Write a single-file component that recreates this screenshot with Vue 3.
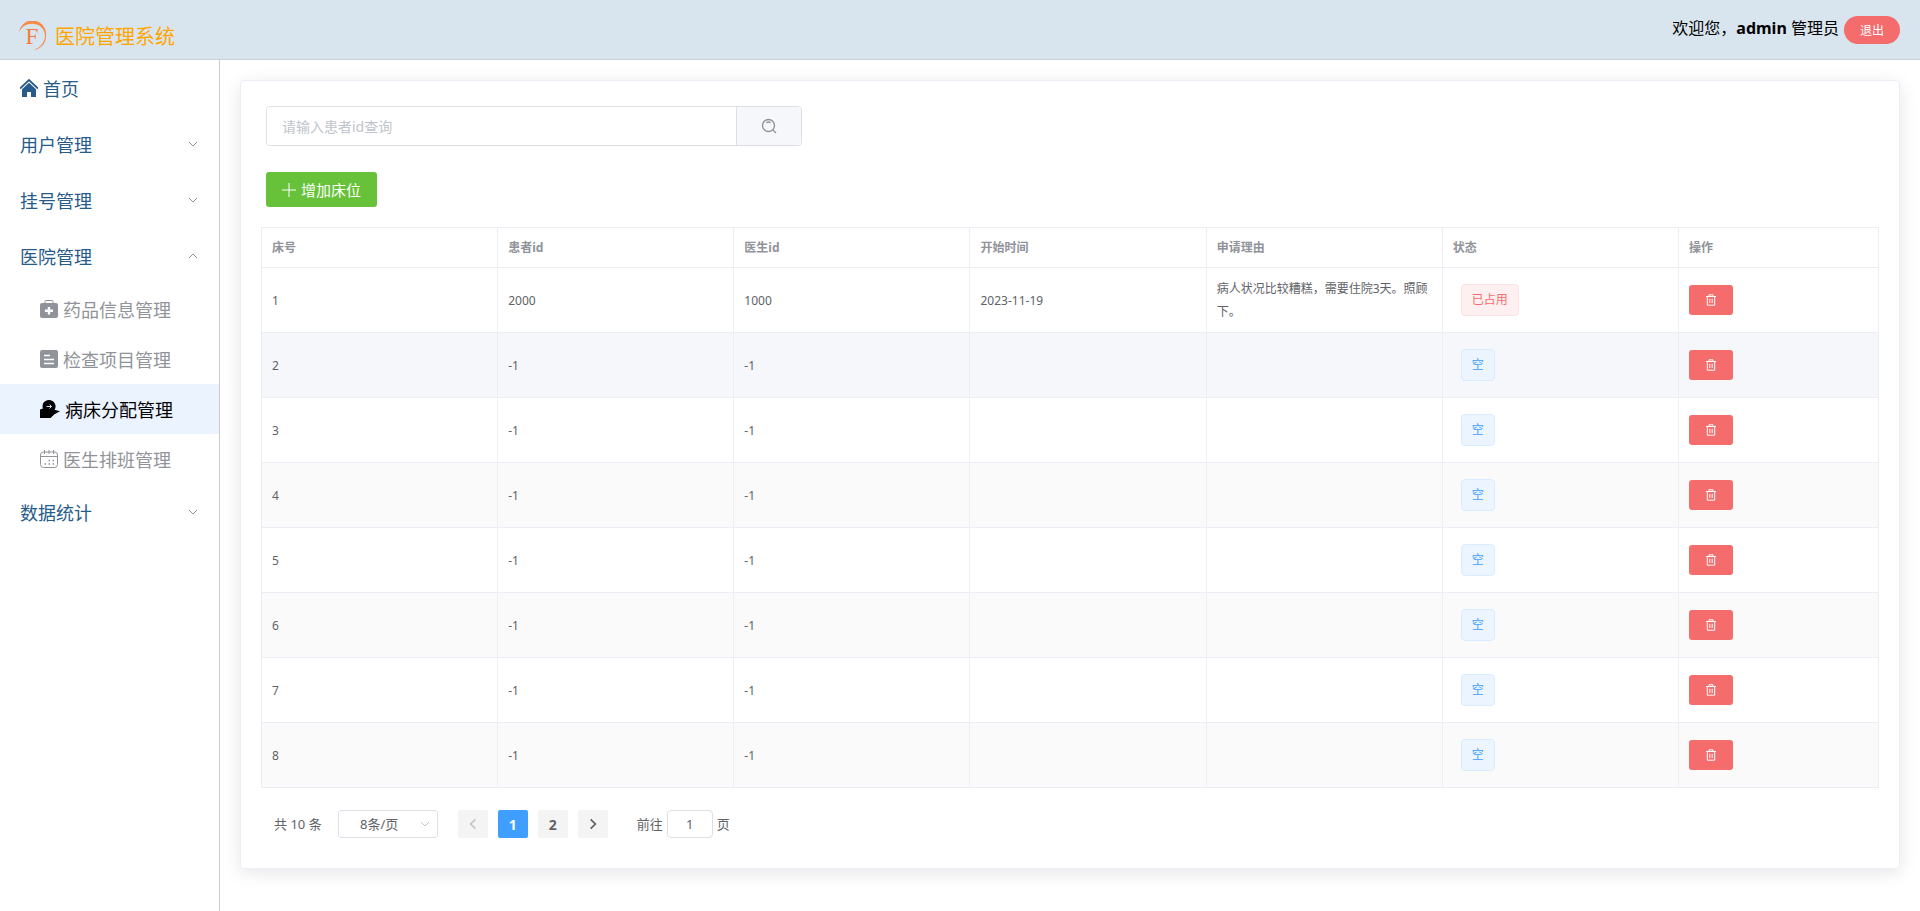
<script setup>
import { ref, computed } from "vue";

const keyword = ref("");
const currentPage = ref(1);
const pageSize = ref(8);
const jumpPage = ref(1);
const total = 10;

const menus = ref([
  { name: "用户管理", open: false, children: [] },
  { name: "挂号管理", open: false, children: [] },
  {
    name: "医院管理",
    open: true,
    children: [
      { name: "药品信息管理", icon: "medicine" },
      { name: "检查项目管理", icon: "order" },
      { name: "病床分配管理", icon: "bed" },
      { name: "医生排班管理", icon: "calendar" },
    ],
  },
  { name: "数据统计", open: false, children: [] },
]);
const activeMenu = ref("病床分配管理");

const columns = ["床号", "患者id", "医生id", "开始时间", "申请理由", "状态", "操作"];

const beds = ref([
  {
    id: 1,
    patient: 2000,
    doctor: 1000,
    start: "2023-11-19",
    reason: "病人状况比较糟糕，需要住院3天。照顾下。",
  },
  ...[2, 3, 4, 5, 6, 7, 8, 9, 10].map((id) => ({
    id,
    patient: -1,
    doctor: -1,
    start: "",
    reason: "",
  })),
]);

const pageCount = computed(() => Math.ceil(total / pageSize.value));
const pageBeds = computed(() => {
  const start = (currentPage.value - 1) * pageSize.value;
  return beds.value.slice(start, start + pageSize.value);
});

const goPage = (page) => {
  currentPage.value = Math.min(Math.max(Number(page) || 1, 1), pageCount.value);
  jumpPage.value = currentPage.value;
};

const removeBed = (id) => {
  beds.value = beds.value.filter((bed) => bed.id !== id);
};
</script>

<template>
  <div class="layout">
    <header class="top">
      <div class="brand">
        <svg class="logo" viewBox="0 0 30 30">
          <path
            d="M1 12A13.500 13.500 0 0 1 28 14C28.500 22 23 28 16 29C23 26 27 21 27 14C25.500 0 5 -1 1 12Z"
            fill="#f58a4b"
          />
          <text x="14" y="23" text-anchor="middle">F</text>
        </svg>
        <span class="title">医院管理系统</span>
      </div>
      <div class="user">
        <span>欢迎您，<b>admin</b> 管理员</span>
        <button class="logout">退出</button>
      </div>
    </header>

    <div class="body">
      <nav class="side">
        <a href="#" class="item">
          <svg class="icon" viewBox="0 0 18 18">
            <path d="M0 9.500 9 1l9 8.500" fill="none" stroke="currentColor" stroke-width="1.800" />
            <path d="M2 10.200 9 3.800l7 6.400V18h-5v-5H7v5H2z" fill="currentColor" />
          </svg>
          <span>首页</span>
        </a>
        <template v-for="menu in menus" :key="menu.name">
          <button class="item group" @click="menu.open = !menu.open">
            <span>{{ menu.name }}</span>
            <svg class="arrow" :class="{ open: menu.open }" viewBox="0 0 12 12">
              <path d="M2 4l4 4 4-4" />
            </svg>
          </button>
          <template v-if="menu.open">
            <a
              v-for="child in menu.children"
              :key="child.name"
              href="#"
              class="item sub"
              :class="{ active: activeMenu === child.name }"
              @click.prevent="activeMenu = child.name"
            >
              <svg v-if="child.icon === 'medicine'" class="icon" viewBox="0 0 18 18">
                <path d="M5 4V1.500a1 1 0 0 1 1-1h6a1 1 0 0 1 1 1V4" fill="none" stroke="currentColor" />
                <path
                  fill="currentColor"
                  fill-rule="evenodd"
                  d="M2 3h14a2 2 0 0 1 2 2v11a2 2 0 0 1-2 2H2a2 2 0 0 1-2-2V5a2 2 0 0 1 2-2zM7.800 7v2.500H5v2.400h2.800v2.600h2.400v-2.600H13V9.500h-2.800V7z"
                />
              </svg>
              <svg v-else-if="child.icon === 'order'" class="icon" viewBox="0 0 18 18">
                <rect width="18" height="18" rx="2" fill="currentColor" />
                <path d="M4 5.500h6M4 9.500h10M4 13.500h10" stroke="#fff" stroke-width="1.300" />
              </svg>
              <svg v-else-if="child.icon === 'bed'" class="icon wide" viewBox="0 0 20 18">
                <path
                  d="M0 9.500 3 8.500A6.200 6.200 0 0 1 9 0a6.400 6.400 0 0 1 6.200 8.500l-.700 1.300 5.500 1.400-5.500 3L10.500 18H0z"
                  fill="currentColor"
                />
                <path d="M6.500 6.500h5M9.500 4.500l2 2-2 2" fill="none" stroke="#ebf3ff" stroke-width="0.900" />
              </svg>
              <svg v-else class="icon" viewBox="0 0 18 18">
                <rect x="0.500" y="2" width="17" height="15.500" rx="3" fill="none" stroke="currentColor" />
                <path d="M1 6.500h16" stroke="currentColor" />
                <path d="M4.500 0v4M9 0v4M13.500 0v4" stroke="currentColor" />
                <path
                  d="M8.500 10.500h1.500M12.500 10.500h1.500M4.500 14h1.500M8.500 14h1.500M12.500 14h1.500"
                  stroke="currentColor"
                  stroke-width="1.500"
                />
              </svg>
              <span>{{ child.name }}</span>
            </a>
          </template>
        </template>
      </nav>

      <main class="main">
        <section class="card">
          <div class="search">
            <input v-model="keyword" type="text" placeholder="请输入患者id查询" aria-label="患者id" />
            <button aria-label="查询">
              <svg viewBox="0 0 16 16">
                <circle cx="7.500" cy="7.500" r="6" />
                <path d="M12 12l3 3M5.500 4.800q2-1.500 4 0" />
              </svg>
            </button>
          </div>

          <button class="add">
            <svg viewBox="0 0 16 16"><path d="M8 1v14M1 8h14" /></svg>
            <span>增加床位</span>
          </button>

          <table class="table">
            <colgroup>
              <col v-for="column in columns" :key="column" :class="{ last: column === '操作' }" />
            </colgroup>
            <thead>
              <tr>
                <th v-for="column in columns" :key="column">{{ column }}</th>
              </tr>
            </thead>
            <tbody>
              <tr v-for="bed in pageBeds" :key="bed.id" :class="{ current: bed.id === 2 }">
                <td>{{ bed.id }}</td>
                <td>{{ bed.patient }}</td>
                <td>{{ bed.doctor }}</td>
                <td>{{ bed.start }}</td>
                <td>{{ bed.reason }}</td>
                <td>
                  <span v-if="bed.patient !== -1" class="tag danger">已占用</span>
                  <span v-else class="tag">空</span>
                </td>
                <td>
                  <button class="delete" aria-label="删除" @click="removeBed(bed.id)">
                    <svg viewBox="0 0 12 12">
                      <path d="M1 2.500h10M4 2.500V.800h4v1.700M2.300 2.500v8.700h7.400V2.500M4.800 4.800v4.200M7.200 4.800v4.200" />
                    </svg>
                  </button>
                </td>
              </tr>
            </tbody>
          </table>

          <div class="pagination">
            <span>共 {{ total }} 条</span>
            <div class="sizes">
              <select v-model="pageSize" aria-label="每页条数" @change="goPage(1)">
                <option :value="8">8条/页</option>
                <option :value="16">16条/页</option>
              </select>
              <svg class="caret" viewBox="0 0 12 12"><path d="M2 4l4 4 4-4" /></svg>
            </div>
            <div class="pager">
              <button :disabled="currentPage === 1" aria-label="上一页" @click="goPage(currentPage - 1)">
                <svg viewBox="0 0 12 12"><path d="M8 2L4 6l4 4" /></svg>
              </button>
              <button
                v-for="page in pageCount"
                :key="page"
                :class="{ active: page === currentPage }"
                @click="goPage(page)"
              >
                {{ page }}
              </button>
              <button
                :disabled="currentPage === pageCount"
                aria-label="下一页"
                @click="goPage(currentPage + 1)"
              >
                <svg viewBox="0 0 12 12"><path d="M4 2l4 4-4 4" /></svg>
              </button>
            </div>
            <label class="jump">
              前往
              <input v-model="jumpPage" type="text" @change="goPage(jumpPage)" />
              页
            </label>
          </div>
        </section>
      </main>
    </div>
  </div>
</template>

<style>
body {
  margin: 0;
}
</style>

<style scoped>
* {
  box-sizing: border-box;
}

.layout {
  min-height: 100vh;
  display: flex;
  flex-direction: column;
  font-family: "Noto Sans", "Noto Sans CJK SC", sans-serif;
  color: #000;
  background: #fff;
}

button,
input,
select {
  font-family: inherit;
}

button {
  cursor: pointer;
}

.top {
  height: 60px;
  display: flex;
  justify-content: space-between;
  align-items: center;
  padding: 0 20px 0 18px;
  background: #d9e5ee;
  border-bottom: 1px solid #ccd0d8;
}

.brand {
  display: flex;
  align-items: center;
  gap: 7px;
  padding-top: 12px;
}

.logo {
  width: 30px;
  height: 30px;
}

.logo text {
  font-family: "Liberation Serif", serif;
  font-size: 23px;
  fill: #f47c3c;
}

.title {
  padding-top: 2px;
  font-size: 20px;
  line-height: 28px;
  color: #ffa500;
}

.user {
  display: flex;
  align-items: center;
  gap: 5px;
  font-size: 16px;
  line-height: 24px;
}

.user span {
  padding-bottom: 4px;
}

.logout {
  height: 28px;
  padding: 0 16px;
  border: none;
  border-radius: 14px;
  background: #f56c6c;
  color: #fff;
  font-size: 12px;
}

.body {
  flex: 1;
  display: flex;
}

.side {
  width: 220px;
  flex-shrink: 0;
  border-right: 1px solid #ccc;
}

.item {
  width: 100%;
  height: 56px;
  display: flex;
  align-items: center;
  gap: 5px;
  padding: 0 20px;
  border: none;
  background: none;
  color: #285b8a;
  font-size: 18px;
  text-decoration: none;
}

.group {
  justify-content: space-between;
}

.sub {
  height: 50px;
  padding-left: 40px;
  color: #909399;
}

.sub.active {
  background: #ebf3ff;
  color: #000;
}

.icon {
  width: 18px;
  height: 18px;
  flex-shrink: 0;
}

.icon.wide {
  width: 20px;
}

.arrow,
.caret {
  width: 12px;
  height: 12px;
  fill: none;
  stroke: #909399;
  stroke-width: 1;
}

.arrow.open {
  transform: rotate(180deg);
}

.main {
  flex: 1;
  min-width: 0;
  padding: 20px;
}

.card {
  padding: 20px 20px 30px;
  border: 1px solid #ebeef5;
  border-radius: 4px;
  background: #fff;
  box-shadow: 0 4px 18px rgba(0, 0, 0, 0.1);
}

.search {
  width: calc(33% + 2px);
  min-width: 280px;
  height: 40px;
  display: flex;
  margin: 5px 5px 26px;
  border: 1px solid #dcdfe6;
  border-radius: 4px;
  overflow: hidden;
}

.search input {
  flex: 1;
  min-width: 0;
  padding: 0 15px;
  border: none;
  outline: none;
  font-size: 14px;
  color: #606266;
}

.search input::placeholder {
  color: #c0c4cc;
}

.search button {
  width: 65px;
  display: flex;
  align-items: center;
  justify-content: center;
  padding: 0;
  border: none;
  border-left: 1px solid #dcdfe6;
  background: #f5f7fa;
}

.search svg {
  width: 16px;
  height: 16px;
  fill: none;
  stroke: #909399;
  stroke-width: 1.4;
}

.add {
  height: 35px;
  display: flex;
  align-items: center;
  gap: 4px;
  margin: 0 5px 20px;
  padding: 0 16px 0 15px;
  border: none;
  border-radius: 3px;
  background: #67c23a;
  color: #fff;
  font-size: 15px;
  line-height: 20px;
}

.add svg {
  width: 16px;
  height: 16px;
  stroke: #fff;
}

.table {
  width: 100%;
  table-layout: fixed;
  border-collapse: separate;
  border-spacing: 0;
  border-top: 1px solid #ebeef5;
  border-left: 1px solid #ebeef5;
  font-size: 12px;
  line-height: 23px;
  color: #606266;
}

.last {
  width: 200px;
}

.table th,
.table td {
  padding: 0 10px;
  border-right: 1px solid #ebeef5;
  border-bottom: 1px solid #ebeef5;
  text-align: left;
}

.table th {
  height: 40px;
  color: #909399;
}

.table td {
  height: 65px;
}

.table tbody tr:nth-child(even) {
  background: #fafafa;
}

.table tbody tr.current,
.table tbody tr:hover {
  background: #f5f7fa;
}

.tag {
  display: inline-block;
  height: 32px;
  margin-left: 8px;
  padding: 0 10px;
  border: 1px solid #d9ecff;
  border-radius: 4px;
  background: #ecf5ff;
  color: #409eff;
  line-height: 30px;
  vertical-align: middle;
}

.tag.danger {
  border-color: #fde2e2;
  background: #fef0f0;
  color: #f56c6c;
}

.delete {
  width: 44px;
  height: 30px;
  display: flex;
  align-items: center;
  justify-content: center;
  border: none;
  border-radius: 3px;
  background: #f56c6c;
}

.delete svg {
  width: 12px;
  height: 12px;
  fill: none;
  stroke: #fff;
}

.pagination {
  display: flex;
  align-items: center;
  margin-top: 22px;
  padding-left: 13px;
  font-size: 13px;
  line-height: 28px;
  color: #606266;
}

.sizes {
  position: relative;
  display: flex;
  margin: 0 20px 0 16px;
}

.sizes select {
  width: 100px;
  height: 28px;
  padding: 0 25px 0 8px;
  appearance: none;
  border: 1px solid #dcdfe6;
  border-radius: 3px;
  background: #fff;
  color: #606266;
  font-size: 13px;
  text-align: center;
  text-align-last: center;
}

.caret {
  position: absolute;
  right: 7px;
  top: 8px;
  stroke: #c0c4cc;
  pointer-events: none;
}

.pager {
  display: flex;
  gap: 10px;
  margin-right: 29px;
}

.pager button {
  width: 30px;
  height: 28px;
  display: flex;
  align-items: center;
  justify-content: center;
  padding: 0;
  border: none;
  border-radius: 2px;
  background: #f4f4f5;
  color: #606266;
  font-size: 14px;
  font-weight: 700;
}

.pager button.active {
  background: #409eff;
  color: #fff;
}

.pager button:disabled {
  color: #c0c4cc;
  cursor: not-allowed;
}

.pager svg {
  width: 14px;
  height: 14px;
  fill: none;
  stroke: currentColor;
  stroke-width: 1.5;
}

.jump {
  display: flex;
  align-items: center;
  gap: 4px;
}

.jump input {
  width: 46px;
  height: 28px;
  padding: 0;
  border: 1px solid #dcdfe6;
  border-radius: 4px;
  color: #606266;
  font-size: 13px;
  text-align: center;
}
</style>
